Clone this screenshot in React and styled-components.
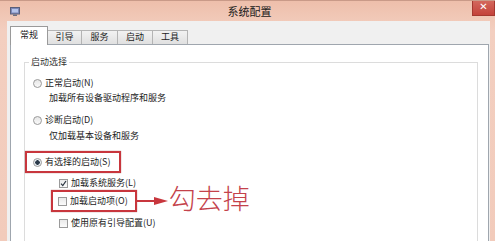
import React from "react";
import styled, { createGlobalStyle } from "styled-components";

const Global = createGlobalStyle`
  html, body {
    margin: 0;
    padding: 0;
    width: 495px;
    height: 241px;
    overflow: hidden;
    background: #f2cbbb;
  }
  * { box-sizing: border-box; }
`;

const Window = styled.div`
  width: 495px;
  height: 241px;
  display: flex;
  flex-direction: column;
  background: linear-gradient(#eebfab, #f3cfc0 30px, #f2cbbb);
  border-top: 1px solid #c99a88;
  font-family: "Noto Sans CJK SC", "Noto Sans", sans-serif;
  color: #222;
  overflow: hidden;
`;

const TitleBar = styled.div`
  height: 20px;
  display: grid;
  grid-template-columns: 1fr auto 1fr;
  align-items: center;
  flex-shrink: 0;
`;

const AppIcon = styled.svg`
  margin-left: 10px;
  display: block;
`;

const Title = styled.div`
  font-size: 11px;
  line-height: 14px;
  color: #1a1a1a;
  padding-left: 4px;
`;

const CloseButton = styled.div`
  justify-self: end;
  align-self: start;
  margin-top: -1px;
  width: 23px;
  height: 16px;
  background: linear-gradient(#d46a5f, #c4423a);
  border: 1px solid #a5382f;
  border-top: none;
  color: #fff;
  font-family: "DejaVu Sans", sans-serif;
  font-size: 10px;
  font-weight: bold;
  line-height: 14px;
  text-align: center;
`;

const Body = styled.div`
  flex: 1;
  margin: 0 5px 0 7px;
  background: #f0f0f0;
  display: flex;
  flex-direction: column;
  padding: 0 1px 0 3px;
`;

const TabStrip = styled.div`
  height: 23px;
  display: flex;
  align-items: flex-end;
  flex-shrink: 0;
  position: relative;
  z-index: 1;
`;

const Tab = styled.div`
  width: ${(p) => p.$w}px;
  height: ${(p) => (p.$active ? 19 : 14)}px;
  margin-bottom: ${(p) => (p.$active ? -1 : 0)}px;
  background: ${(p) =>
    p.$active ? "#fff" : "linear-gradient(#f2f2f2, #e0e0e0)"};
  border: 1px solid ${(p) => (p.$active ? "#9a9a9a" : "#b4b4b4")};
  border-bottom: none;
  border-left-width: ${(p) => (p.$first || p.$active ? 1 : 0)}px;
  font-size: 9px;
  line-height: ${(p) => (p.$active ? 15 : 12)}px;
  text-align: center;
  color: #222;
`;

const Panel = styled.div`
  flex: 1;
  background: #fff;
  border: 1px solid #9fa6ae;
  border-bottom: none;
  display: flex;
  flex-direction: column;
`;

const Group = styled.fieldset`
  margin: 11px 10px 0 13px;
  padding: 0;
  border: 1px solid #dcdcdc;
  border-bottom: none;
  flex: 1;
  display: flex;
  flex-direction: column;
  align-items: flex-start;
`;

const Legend = styled.legend`
  margin-left: 4px;
  padding: 0 2px;
  font-size: 9px;
  line-height: 12px;
  color: #333;
`;

const Row = styled.div`
  display: flex;
  align-items: center;
  height: ${(p) => p.$h || 14}px;
  margin-top: ${(p) => p.$mt || 0}px;
  padding-left: ${(p) => p.$indent || 0}px;
  font-size: 9px;
  line-height: 12px;
  white-space: nowrap;
`;

const Highlight = styled.div`
  display: flex;
  align-items: center;
  height: 22px;
  border: 2px solid #c8363d;
  box-shadow: 0 0 1px rgba(120, 20, 20, 0.6);
  padding: 0 ${(p) => p.$pr}px 0 ${(p) => p.$pl}px;
`;

const Radio = styled.span`
  width: 9px;
  height: 9px;
  border-radius: 50%;
  border: 1px solid #9a9a9a;
  background: ${(p) =>
    p.$on
      ? "radial-gradient(circle, #2b3a4a 0 2px, #e9eef3 2.5px)"
      : "linear-gradient(#e6e6e6, #fafafa)"};
  margin-right: 3px;
  flex-shrink: 0;
`;

const Check = styled.span`
  width: 9px;
  height: 9px;
  border: 1px solid #9a9a9a;
  background: linear-gradient(#e9e9e9, #fbfbfb);
  margin-right: 3px;
  flex-shrink: 0;
  display: flex;
  align-items: center;
  justify-content: center;
`;

const Note = styled.span`
  font-size: 27px;
  line-height: 30px;
  color: #c4424b;
  font-weight: 300;
  margin-top: -7px;
  letter-spacing: 0;
`;

const RadioItem = ({ on, label, mt, pl }) => (
  <Row $mt={mt} $indent={pl}>
    <Radio $on={on} />
    <span>{label}</span>
  </Row>
);

const CheckItem = ({ on, label }) => (
  <>
    <Check>
      {on && (
        <svg width="7" height="7" viewBox="0 0 7 7">
          <path d="M1 3.6 L2.8 5.6 L6 1" fill="none" stroke="#2a3340" strokeWidth="1.2" />
        </svg>
      )}
    </Check>
    <span>{label}</span>
  </>
);

const tabs = [
  { name: "常规", w: 38 },
  { name: "引导", w: 34 },
  { name: "服务", w: 36 },
  { name: "启动", w: 35 },
  { name: "工具", w: 35 },
];

const App = () => (
  <>
    <Global />
    <Window>
      <TitleBar>
        <AppIcon width="10" height="9" viewBox="0 0 10 9">
          <rect x="0.5" y="0.5" width="9" height="6.5" fill="#7d88b8" stroke="#5a5f7a" />
          <rect x="2" y="2" width="6" height="3.5" fill="#b6c4ea" />
          <rect x="3" y="7.5" width="4" height="1.5" fill="#6d6f80" />
        </AppIcon>
        <Title>系统配置</Title>
        <CloseButton>✕</CloseButton>
      </TitleBar>
      <Body>
        <TabStrip>
          {tabs.map((t, i) => (
            <Tab key={t.name} $w={t.w} $active={i === 0} $first={i === 0}>
              {t.name}
            </Tab>
          ))}
        </TabStrip>
        <Panel>
          <Group>
            <Legend>启动选择</Legend>
            <RadioItem label="正常启动(N)" mt={8} pl={8} />
            <Row $mt={1} $indent={24}>加载所有设备驱动程序和服务</Row>
            <RadioItem label="诊断启动(D)" mt={8} pl={8} />
            <Row $mt={2} $indent={24}>仅加载基本设备和服务</Row>
            <Row $mt={8} $h={22}>
              <Highlight $pl={6} $pr={9}>
                <Radio $on />
                <span>有选择的启动(S)</span>
              </Highlight>
            </Row>
            <Row $mt={4} $h={12} $indent={34}>
              <CheckItem on label="加载系统服务(L)" />
            </Row>
            <Row $mt={1} $h={22} $indent={26}>
              <Highlight $pl={5} $pr={7}>
                <CheckItem label="加载启动项(O)" />
              </Highlight>
              <svg width="32" height="12" viewBox="0 0 32 12">
                <line x1="0" y1="6" x2="20" y2="6" stroke="#c8363d" strokeWidth="2" />
                <path d="M17 2 L31 6 L17 10 Z" fill="#c8363d" />
              </svg>
              <Note>勾去掉</Note>
            </Row>
            <Row $mt={4} $indent={34}>
              <CheckItem label="使用原有引导配置(U)" />
            </Row>
          </Group>
        </Panel>
      </Body>
    </Window>
  </>
);

export default App;
